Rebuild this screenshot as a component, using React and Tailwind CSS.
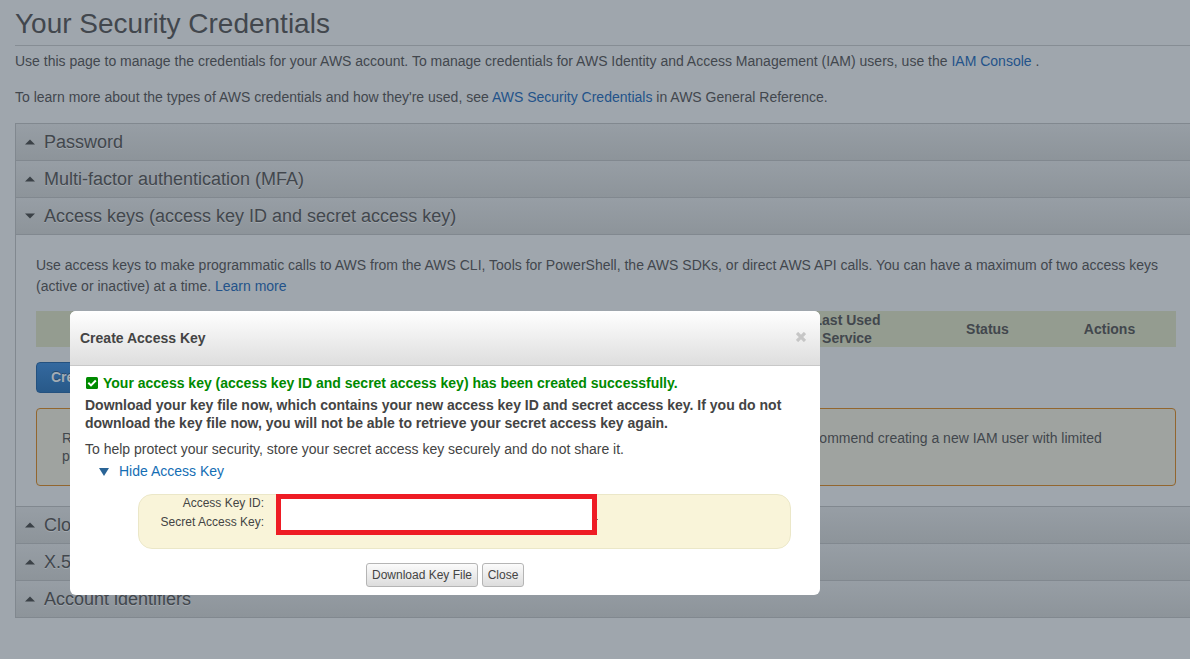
import React from "react";

const links = "text-[#23538a]";

function SectionHeader({ title, open }) {
  return (
    <div className="flex h-[37px] items-center border-t border-l border-[#81888f] bg-linear-to-b from-[#979ea5] to-[#8d949a] pl-[9px] text-[18px]">
      <svg width="10" height="6" viewBox="0 0 10 6" className="mr-[9px] shrink-0 fill-[#3b4147]">
        {open ? <path d="M0 0.5H10L5 5.5Z" /> : <path d="M0 5.5H10L5 0.5Z" />}
      </svg>
      <span className="whitespace-nowrap [text-shadow:0_1px_0_#a3a9af]">{title}</span>
    </div>
  );
}

function AccessKeysPanel() {
  return (
    <div className="flex h-[272px] flex-col border-t border-l border-[#81888f] pt-[20px] pr-[14px] pl-[20px]">
      <p className="h-[56px] text-[14px] leading-[21px] whitespace-nowrap">
        Use access keys to make programmatic calls to AWS from the AWS CLI, Tools for PowerShell, the AWS SDKs, or direct AWS API calls. You can have a maximum of two access keys
        <br />
        (active or inactive) at a time. <a className={links}>Learn more</a>
      </p>
      <div className="flex h-[36px] shrink-0 items-center bg-[#949c90] text-center text-[14px] leading-[18px] font-bold">
        <div className="w-[120px]">Created</div>
        <div className="w-[180px]">Access Key ID</div>
        <div className="w-[210px]">Last Used</div>
        <div className="w-[230px]">Last Used Region</div>
        <div className="w-[142px]">Last Used<br />Service</div>
        <div className="w-[139px]">Status</div>
        <div className="w-[105px]">Actions</div>
      </div>
      <button className="mt-[15px] h-[31px] w-[184px] shrink-0 rounded-[4px] border border-[#24517f] bg-linear-to-b from-[#34699f] to-[#285989] pl-[14px] text-left text-[14px] font-bold text-[#a3acb4] [text-shadow:0_-1px_0_#27496b]">
        Create New Access Key
      </button>
      <div className="mt-[15px] h-[78px] shrink-0 rounded-[4px] border border-[#92662f] bg-[#9fa3a0] pt-[20px] pl-[25px] text-[14px] leading-[18px] whitespace-nowrap">
        Root user access keys provide unrestricted access to your entire AWS account. If you need long-term access keys, we recommend creating a new IAM user with limited
        <br />
        permissions and generating access keys for that user instead.
      </div>
    </div>
  );
}

function DialogButton({ children, className }) {
  return (
    <button className={"h-[24px] rounded-[3px] border border-[#b5b5b5] bg-linear-to-b from-[#fbfbfb] to-[#dddddd] text-[12px] whitespace-nowrap text-[#444] " + className}>
      {children}
    </button>
  );
}

function CreateKeyDialog() {
  return (
    <div className="absolute top-[311px] left-[70px] flex h-[284px] w-[750px] flex-col overflow-hidden rounded-[6px] bg-white text-[14px] text-[#444]">
      <div className="flex h-[55px] shrink-0 items-center justify-between border-b border-[#c8c8c8] bg-linear-to-b from-white to-[#dedede] pr-[14px] pl-[10px]">
        <h2 className="font-bold">Create Access Key</h2>
        <svg width="10" height="10" viewBox="0 0 10 10" className="-mt-[3px] stroke-[#c6c6c6]" strokeWidth="3.2">
          <path d="M1 1L9 9M9 1L1 9" />
        </svg>
      </div>
      <div className="flex flex-col pt-[8px] pl-[15px] leading-[18px] whitespace-nowrap">
        <div className="flex items-center font-bold text-[#008a00]">
          <svg width="12" height="12" viewBox="0 0 12 12" className="-mt-px mr-[5px] ml-px">
            <rect width="12" height="12" rx="1.5" fill="#008a00" />
            <path d="M2.3 5.8L5 8.4L9.8 3.5" fill="none" stroke="#fff" strokeWidth="2" />
          </svg>
          Your access key (access key ID and secret access key) has been created successfully.
        </div>
        <p className="mt-[4px] font-bold">
          Download your key file now, which contains your new access key ID and secret access key. If you do not
          <br />
          download the key file now, you will not be able to retrieve your secret access key again.
        </p>
        <p className="mt-[8px]">To help protect your security, store your secret access key securely and do not share it.</p>
        <a className="mt-[4px] flex items-center text-[#146eb4]">
          <svg width="10" height="8" viewBox="0 0 10 8" className="mt-[2px] mr-[10px] ml-[14px] fill-[#2a6496]">
            <path d="M0 0H10L5 8Z" />
          </svg>
          Hide Access Key
        </a>
      </div>
      <div className="mt-[14px] ml-[68px] flex h-[55px] w-[653px] shrink-0 rounded-[14px] border border-[#ebe7c8] bg-[#f9f4d9] text-[12px]">
        <div className="-mt-px w-[125px] text-right leading-[19px]">
          <div>Access Key ID:</div>
          <div>Secret Access Key:</div>
        </div>
        <div className="-mt-px ml-[12px] h-[41px] w-[321px] border-5 border-[#ee1c24] bg-white" />
        <div className="mt-[24px] h-px w-px bg-[#777]" />
      </div>
      <div className="mt-[14px] ml-[296px] flex gap-[4px]">
        <DialogButton className="w-[112px]">Download Key File</DialogButton>
        <DialogButton className="w-[42px]">Close</DialogButton>
      </div>
    </div>
  );
}

export default function App() {
  return (
    <div className="relative h-[659px] w-[1190px] overflow-hidden bg-[#9fa6ad] pl-[15px] font-['Liberation_Sans',Arial,sans-serif] text-[#42474d]">
      <h1 className="h-[46px] border-b border-[#868d94] pt-[8px] text-[28px] leading-[32px] whitespace-nowrap">Your Security Credentials</h1>
      <p className="mt-[5px] text-[14px] leading-[20px] whitespace-nowrap">
        Use this page to manage the credentials for your AWS account. To manage credentials for AWS Identity and Access Management (IAM) users, use the <a className={links}>IAM Console</a> .
      </p>
      <p className="mt-[16px] text-[14px] leading-[20px] whitespace-nowrap">
        To learn more about the types of AWS credentials and how they're used, see <a className={links}>AWS Security Credentials</a> in AWS General Reference.
      </p>
      <div className="mt-[16px] border-b border-[#81888f]">
        <SectionHeader title="Password" />
        <SectionHeader title="Multi-factor authentication (MFA)" />
        <SectionHeader title="Access keys (access key ID and secret access key)" open />
        <AccessKeysPanel />
        <SectionHeader title="CloudFront key pairs" />
        <SectionHeader title="X.509 certificate" />
        <SectionHeader title="Account identifiers" />
      </div>
      <CreateKeyDialog />
    </div>
  );
}
